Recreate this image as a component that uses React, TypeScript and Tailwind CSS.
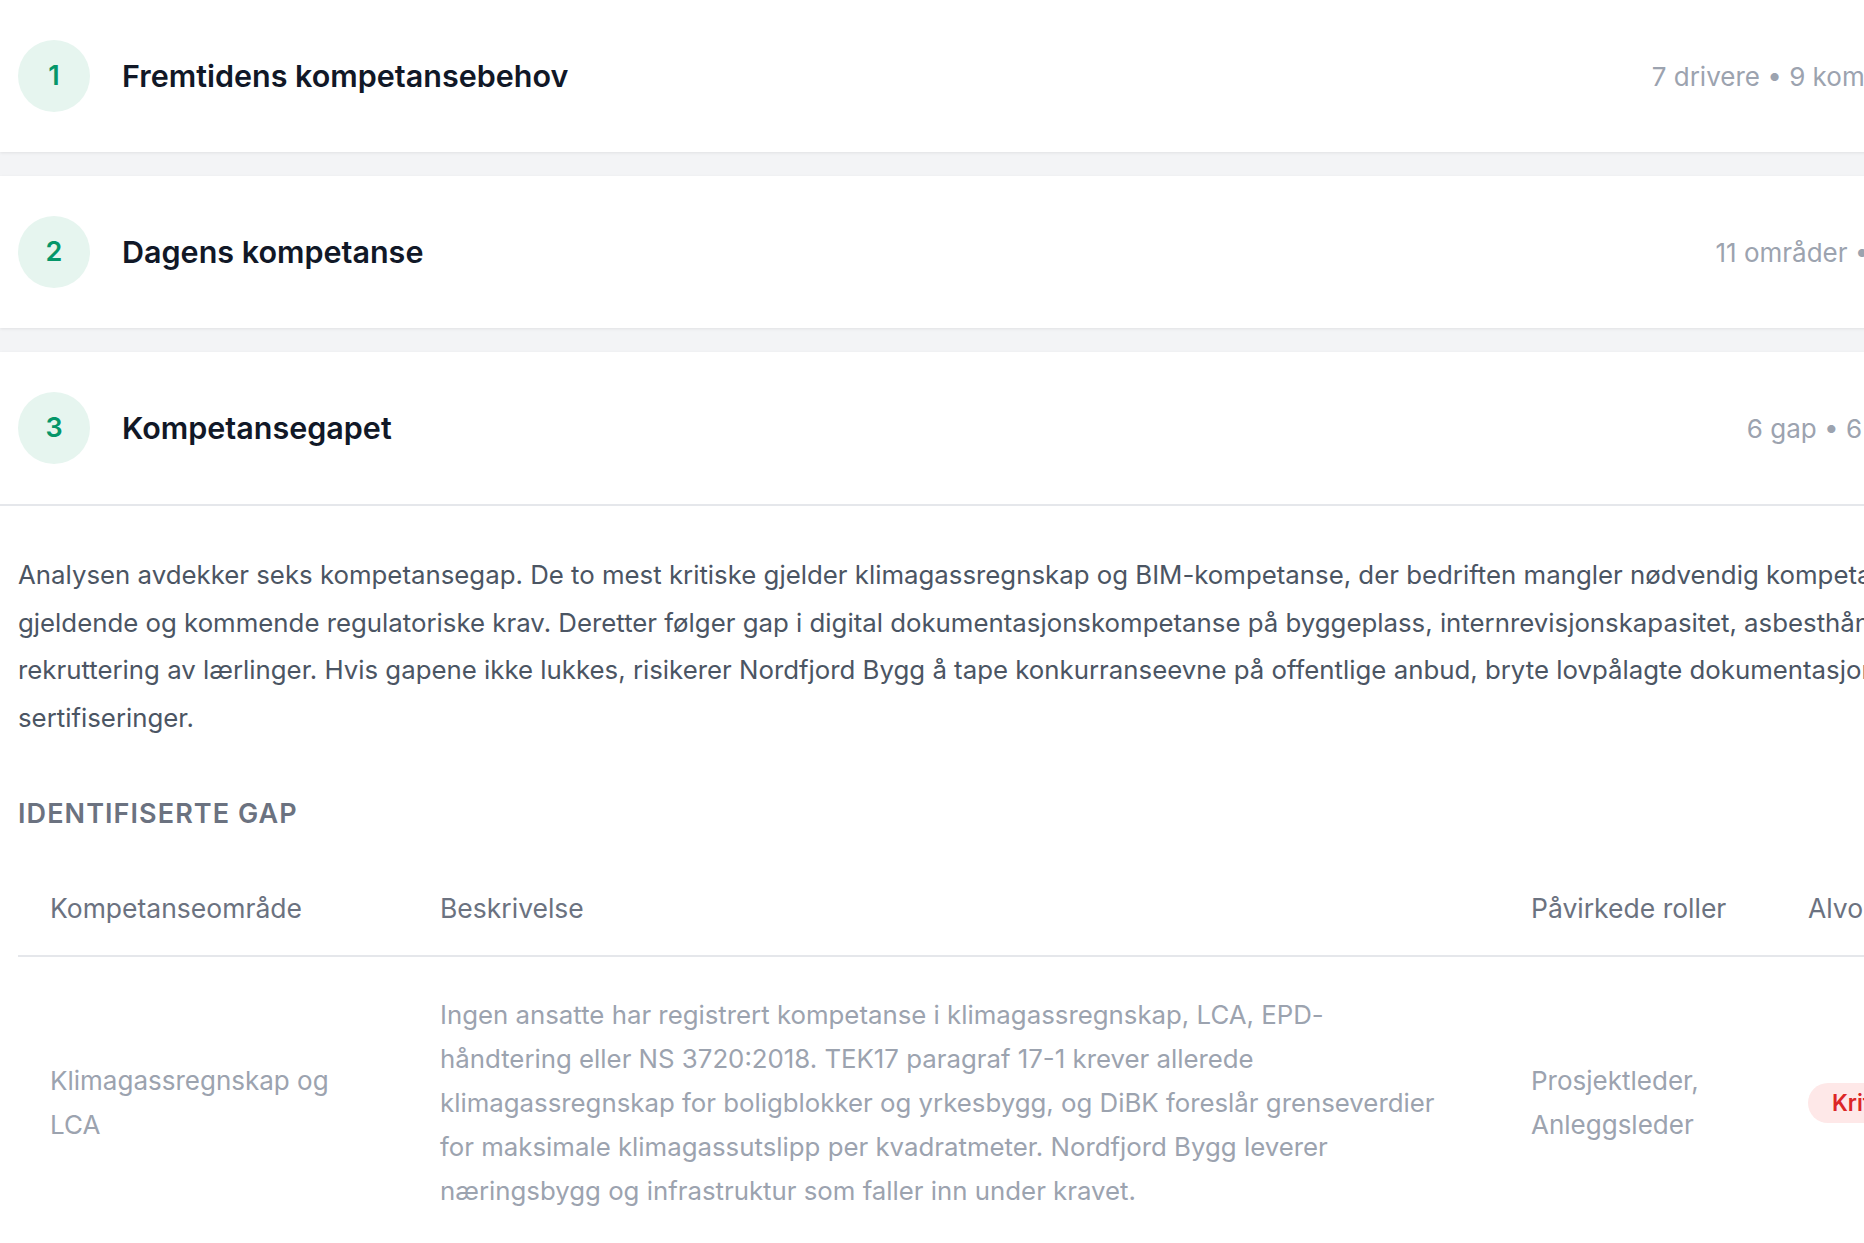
import { ChevronDown, ChevronUp } from 'lucide-react'

const sections = [
  { num: 1, title: 'Fremtidens kompetansebehov', meta: '7 drivere • 9 kompetanser', open: false },
  { num: 2, title: 'Dagens kompetanse', meta: '11 områder • 12 roller', open: false },
  { num: 3, title: 'Kompetansegapet', meta: '6 gap • 6 områder', open: true },
]

const gaps = [
  {
    area: 'Klimagassregnskap og LCA',
    description:
      'Ingen ansatte har registrert kompetanse i klimagassregnskap, LCA, EPD-håndtering eller NS 3720:2018. TEK17 paragraf 17-1 krever allerede klimagassregnskap for boligblokker og yrkesbygg, og DiBK foreslår grenseverdier for maksimale klimagassutslipp per kvadratmeter. Nordfjord Bygg leverer næringsbygg og infrastruktur som faller inn under kravet.',
    roles: 'Prosjektleder, Anleggsleder',
    severity: 'Kritisk',
  },
]

function SectionHeader({ num, title, meta, open }: { num: number; title: string; meta: string; open: boolean }) {
  const Chevron = open ? ChevronUp : ChevronDown
  return (
    <div className="flex items-center py-10 pl-[18px] pr-10">
      <div className="flex h-[72px] w-[72px] shrink-0 items-center justify-center rounded-full bg-[#e6f5ef] text-[27px] font-semibold text-[#059669]">
        {num}
      </div>
      <h2 className="ml-[32px] text-[30.5px] font-semibold text-[#111827]">{title}</h2>
      <div className="ml-auto flex items-center gap-6">
        <span className="text-[26px] text-[#9ca3af]">{meta}</span>
        <Chevron className="h-8 w-8 text-[#9ca3af]" />
      </div>
    </div>
  )
}

export default function App() {
  return (
    <div className="h-screen w-full overflow-hidden bg-[#f3f4f6]" style={{ fontFamily: 'Inter, "Noto Sans", sans-serif' }}>
      <div className="flex w-[2069px] flex-col gap-6">
        {sections.map((s) => (
          <section key={s.num} className="bg-white shadow-[0_1px_3px_rgba(0,0,0,0.08)]">
            <SectionHeader {...s} />
            {s.open && (
              <div className="border-t-2 border-[#e5e7eb] pl-[18px] pt-[45px] pb-10">
                <p className="whitespace-nowrap text-[25.8px] leading-[47.5px] text-[#4b5563]">
                  Analysen avdekker seks kompetansegap. De to mest kritiske gjelder klimagassregnskap og BIM-kompetanse, der bedriften mangler nødvendig kompetanse for å møte
                  <br />
                  gjeldende og kommende regulatoriske krav. Deretter følger gap i digital dokumentasjonskompetanse på byggeplass, internrevisjonskapasitet, asbesthåndtering og
                  <br />
                  rekruttering av lærlinger. Hvis gapene ikke lukkes, risikerer Nordfjord Bygg å tape konkurranseevne på offentlige anbud, bryte lovpålagte dokumentasjonskrav og
                  <br />
                  sertifiseringer.
                </p>

                <h3 className="mt-[57px] text-[27px] font-semibold uppercase leading-[32px] tracking-[0.04em] text-[#6b7280]">
                  Identifiserte gap
                </h3>

                <table className="mt-[31px] w-[2020px] table-fixed border-collapse text-left">
                  <colgroup>
                    <col className="w-[390px]" />
                    <col className="w-[1091px]" />
                    <col className="w-[277px]" />
                    <col className="w-[262px]" />
                  </colgroup>
                  <thead>
                    <tr className="border-b-2 border-[#e5e7eb]">
                      <th className="px-8 py-[29px] text-[26.5px] font-normal leading-[36px] text-[#6b7280]">Kompetanseområde</th>
                      <th className="px-8 py-[29px] text-[26.5px] font-normal leading-[36px] text-[#6b7280]">Beskrivelse</th>
                      <th className="px-8 py-[29px] text-[26.5px] font-normal leading-[36px] text-[#6b7280]">Påvirkede roller</th>
                      <th className="px-8 py-[29px] text-[26.5px] font-normal leading-[36px] text-[#6b7280]">Alvorlighet</th>
                    </tr>
                  </thead>
                  <tbody>
                    {gaps.map((g) => (
                      <tr key={g.area} className="border-b-2 border-[#e5e7eb] align-middle">
                        <td className="px-8 py-9 text-[26px] leading-[44px] text-[#9ca3af]">{g.area}</td>
                        <td className="px-8 py-9 text-[25.8px] leading-[44px] text-[#9ca3af]">
                          <div className="max-w-[1010px]">{g.description}</div>
                        </td>
                        <td className="px-8 py-9 text-[26px] leading-[44px] text-[#9ca3af]">{g.roles}</td>
                        <td className="px-8 py-9">
                          <span className="inline-flex h-10 items-center rounded-full bg-[#fee8e8] px-6 text-[22.5px] font-semibold text-[#dc2626]">
                            {g.severity}
                          </span>
                        </td>
                      </tr>
                    ))}
                  </tbody>
                </table>
              </div>
            )}
          </section>
        ))}
      </div>
    </div>
  )
}
